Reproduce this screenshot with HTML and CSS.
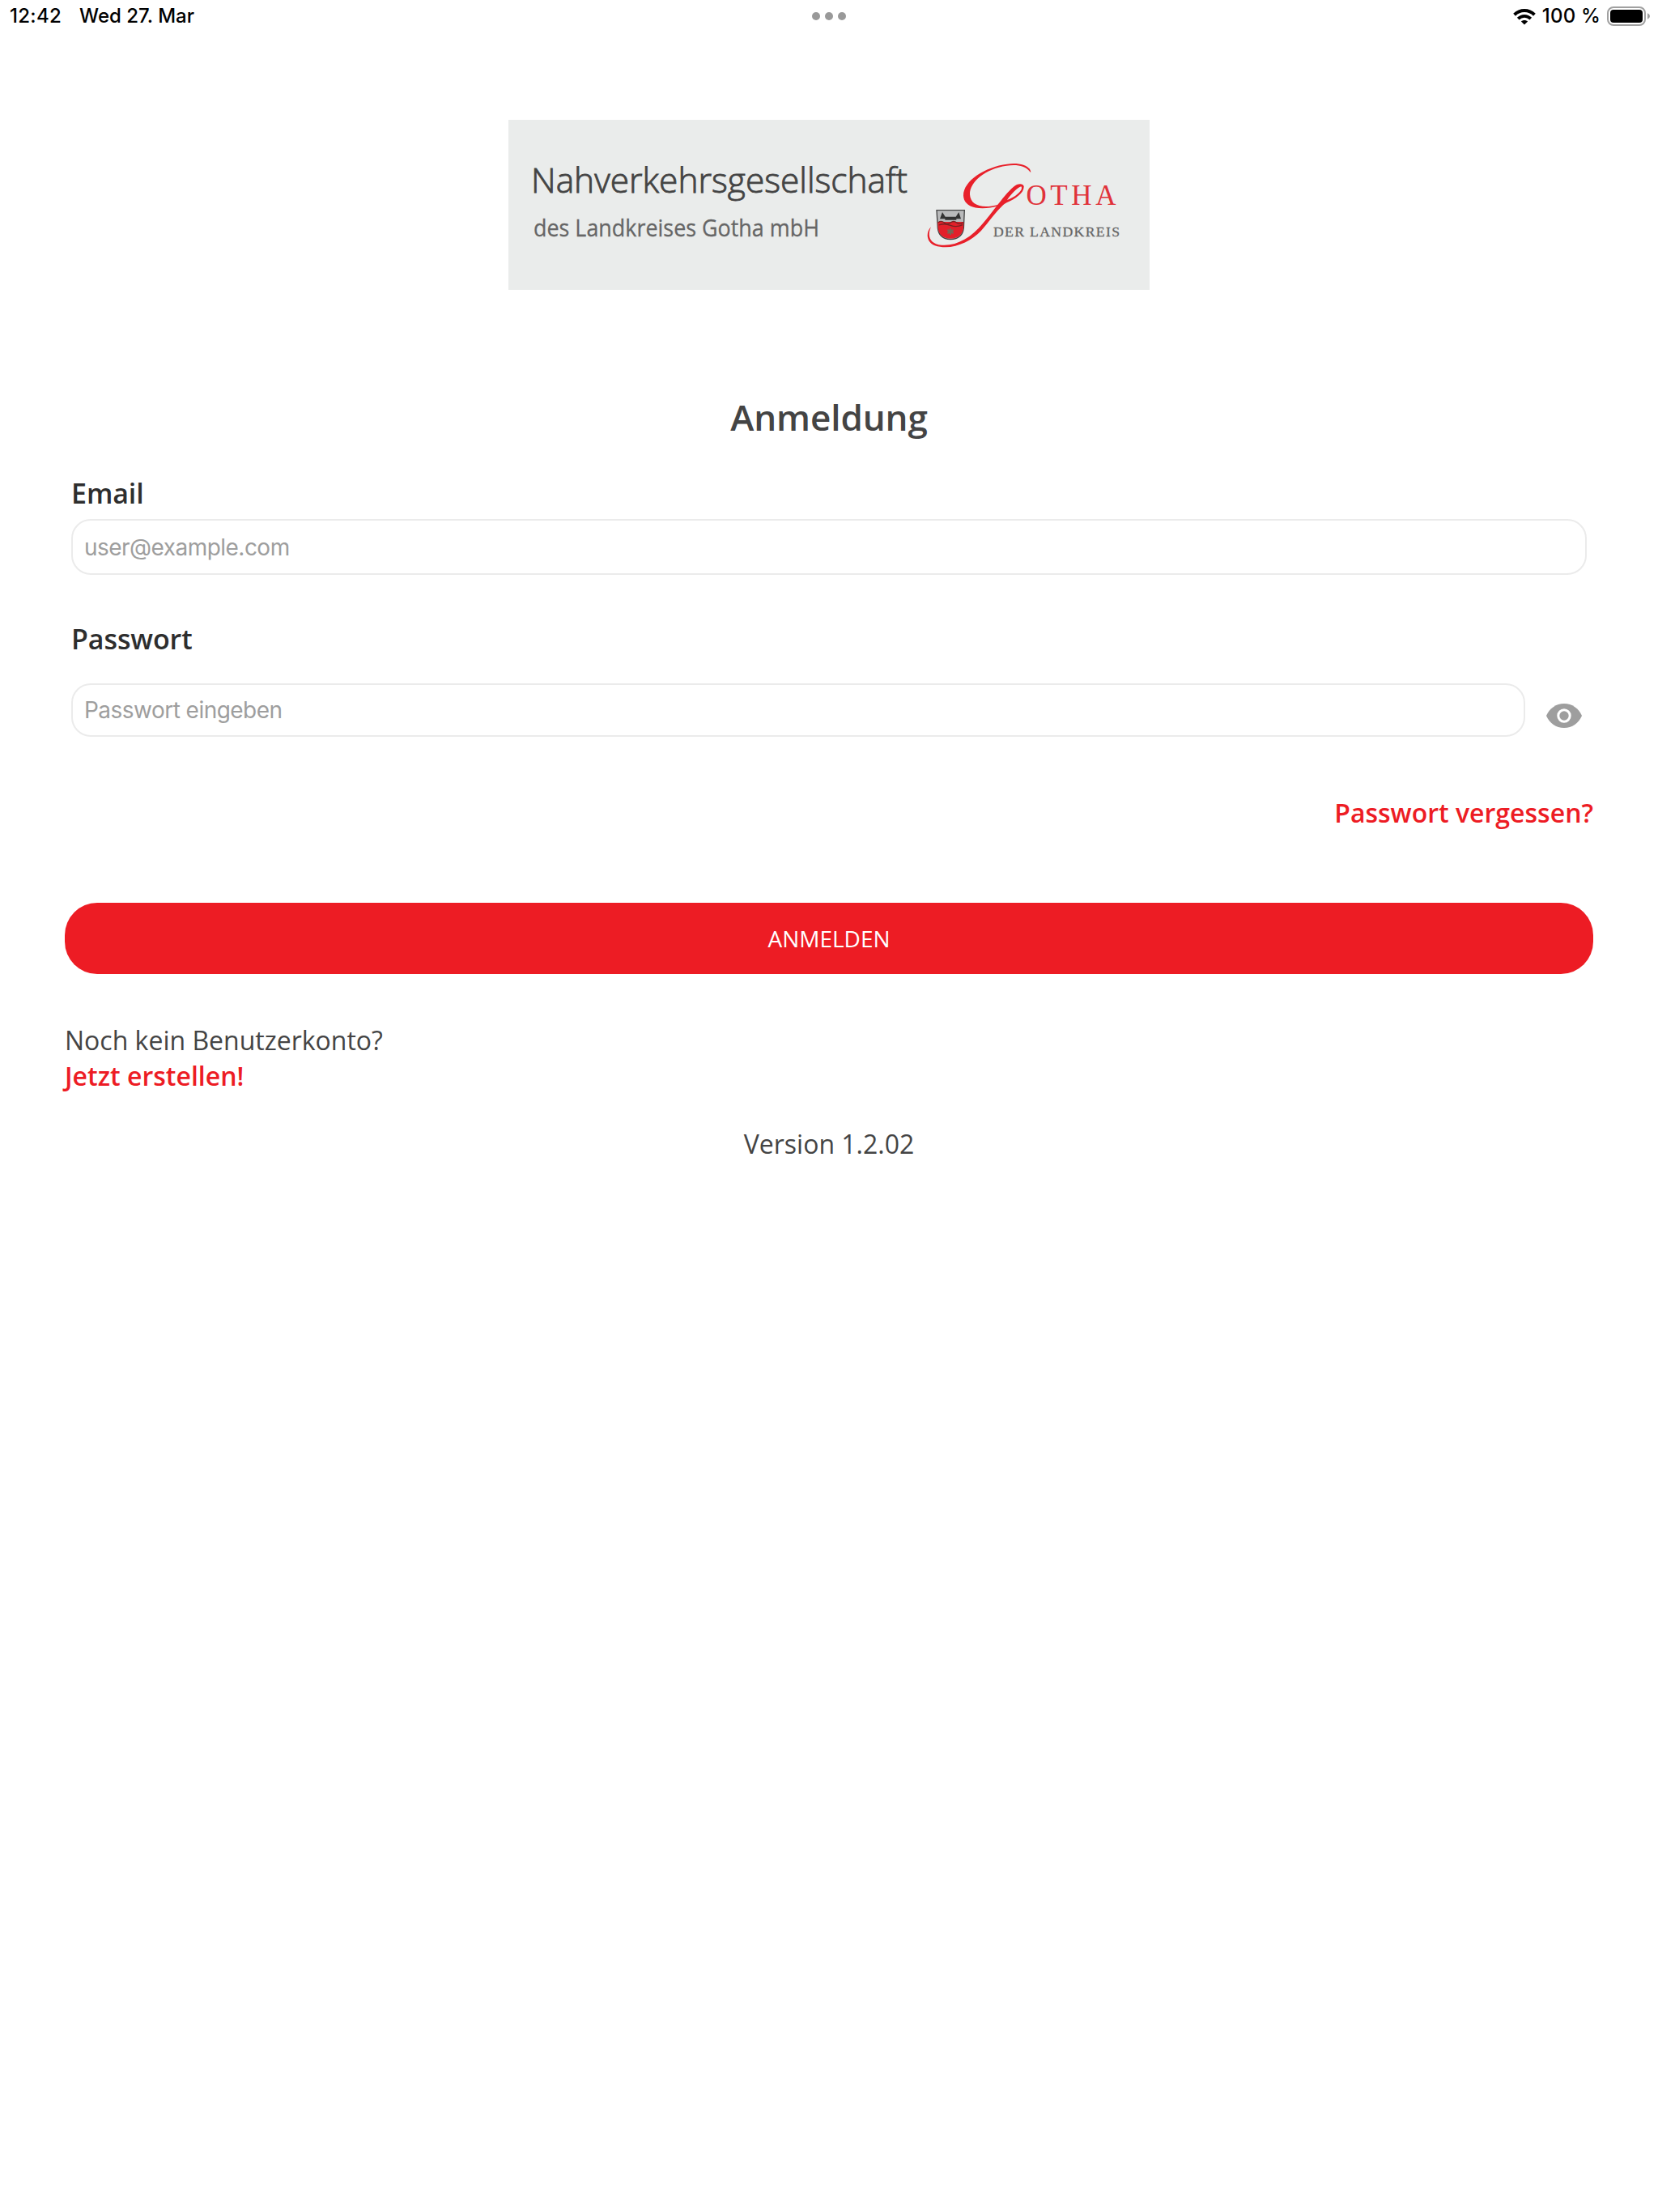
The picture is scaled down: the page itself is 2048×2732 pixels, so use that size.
FILE: index.html
```
<!DOCTYPE html>
<html lang="de">
<head>
<meta charset="utf-8">
<title>Anmeldung</title>
<link rel="stylesheet" href="styles.css">
</head>
<body>
<header class="status">
  <div class="status-left"><span class="time">12:42</span><span class="date">Wed 27. Mar</span></div>
  <div class="dots"><i></i><i></i><i></i></div>
  <div class="status-right">
    <svg class="wifi" viewBox="0 0 28 21" width="28" height="21">
      <path d="M1.6 8.2C8.6 1.4 19.4 1.4 26.4 8.2" fill="none" stroke="#000" stroke-width="4"/>
      <path d="M6.2 13.1C10.8 8.7 17.2 8.7 21.8 13.1" fill="none" stroke="#000" stroke-width="3.8"/>
      <path d="M14 20.4L9.9 16.4C12.2 14.4 15.8 14.4 18.1 16.4Z"/>
    </svg>
    <span class="percent">100 %</span>
    <svg class="battery" viewBox="0 0 54 24" width="54" height="24">
      <rect x="1" y="1" width="46" height="22" rx="7" fill="none" stroke="#a0a0a0" stroke-width="2"/>
      <rect x="4" y="4" width="40" height="16" rx="4"/>
      <path d="M50 8.2Q53 9.5 53 12T50 15.8Z" fill="#a0a0a0"/>
    </svg>
  </div>
</header>
<main class="page">
  <svg class="logo" viewBox="0 0 792 210" width="792" height="210">
    <rect width="793" height="210" fill="#eaeceb"/>
    <text class="logo-name" x="28" y="89.5" textLength="465" lengthAdjust="spacingAndGlyphs">Nahverkehrsgesellschaft</text>
    <text class="logo-sub" x="31" y="144.3" textLength="353" lengthAdjust="spacingAndGlyphs">des Landkreises Gotha mbH</text>
    <g transform="translate(492 -8) scale(.33333)">
      <path fill="#e8202a" d="M460 220C458 190 412 182 372 188C290 198 209 250 210 305C212 348 268 364 342 342L340 338C280 354 236 342 234 300C233 255 290 205 370 194C412 189 440 194 460 220Z"/>
      <path fill="#e8202a" fill-rule="evenodd" d="M90 421C70 440 72 478 104 490C165 510 235 478 275 436C312 394 346 342 372 330C404 316 436 294 434 270C430 258 410 260 396 272C362 300 322 362 282 408C240 460 185 492 130 488C82 484 76 450 90 421ZM372 321C386 300 412 274 424 271C434 282 406 308 372 321Z"/>
      <path d="M111 359H214L211 425C208 452 190 466 162 467C135 466 118 452 115 425Z" fill="#b9babb" stroke="#444" stroke-width="4"/>
      <path d="M115 402H211L210 425C206 450 190 463 162 464C135 463 119 450 116 425Z" fill="#e2202a"/>
      <path d="M123 391L132 366L143 383H182L193 366L201 391H184V395H142V391Z" fill="#333"/>
      <path d="M117 404Q128 396 139 405T162 405T185 405T209 404M119 414Q140 406 162 415T207 413" fill="none" stroke="#722" stroke-width="4"/>
      <path d="M162 426V450M151 432L173 444M173 432L151 444" stroke="#765" stroke-width="6"/>
    </g>
    <text class="logo-gotha" x="639.5" y="105.3" textLength="111" lengthAdjust="spacing">OTHA</text>
    <text class="logo-kreis" x="599" y="143.7" textLength="156" lengthAdjust="spacing">DER LANDKREIS</text>
  </svg>
  <h1>Anmeldung</h1>
  <form class="form">
    <label class="label" for="email">Email</label>
    <input class="field email" id="email" type="email" placeholder="user@example.com">
    <label class="label label-pw" for="pw">Passwort</label>
    <div class="pw-row">
      <input class="field pw" id="pw" type="password" placeholder="Passwort eingeben">
      <svg class="eye" viewBox="0 0 44 30" width="44" height="30">
        <path d="M0 15C4 6 12 0 22 0S40 6 44 15C40 24 32 30 22 30S4 24 0 15Z" fill="#9e9e9e"/>
        <circle cx="22" cy="15" r="7.2" fill="none" stroke="#fff" stroke-width="3"/>
      </svg>
    </div>
  </form>
  <a class="link forgot">Passwort vergessen?</a>
  <button class="submit" type="button">ANMELDEN</button>
  <p class="hint">Noch kein Benutzerkonto?</p>
  <a class="link create">Jetzt erstellen!</a>
  <p class="version">Version 1.2.02</p>
</main>
</body>
</html>
```
FILE: styles.css
```
* { box-sizing: border-box; }
body { margin: 0; background: #fff; color: #444; font-family: "Open Sans", sans-serif; }
h1, p { margin: 0; }
.status { display: grid; grid-template-columns: 1fr auto 1fr; align-items: center; height: 40px; font: 500 24px/40px Inter, sans-serif; color: #000; }
.status-left { display: flex; gap: 22px; padding-left: 12px; }
.time { letter-spacing: .3px; }
.dots { display: flex; gap: 6px; }
.dots i { width: 10px; height: 10px; border-radius: 50%; background: #999; }
.status-right { display: flex; justify-content: flex-end; align-items: center; padding-right: 9px; }
.percent { margin: 0 8px 0 8px; letter-spacing: .2px; }
.page { display: flex; flex-direction: column; padding: 108px 80px 0; }
.logo { align-self: center; display: block; }
.logo-name { font: 300 43px "Open Sans", sans-serif; fill: #444; stroke: #444; stroke-width: .9px; }
.logo-sub { font: 400 30px "Open Sans", sans-serif; fill: #666; stroke: #666; stroke-width: .3px; }
.logo-gotha { font: 35px "Liberation Serif", serif; fill: #e0323a; }
.logo-kreis { font: 17.7px "Liberation Serif", serif; fill: #666; stroke: #666; stroke-width: .3px; }
h1 { margin-top: 127px; text-align: center; font-size: 44px; line-height: 60px; font-weight: 600; letter-spacing: -.1px; }
.form { display: flex; flex-direction: column; padding: 0 8px; margin-top: 41px; }
.label { font-size: 34px; line-height: 46px; font-weight: 600; color: #2e2e2e; letter-spacing: -.1px; }
.field { border: 2px solid #ebebeb; border-radius: 24px; padding: 0 14px; font: 28px Inter, sans-serif; letter-spacing: -.53px; background: #fff; }
.field::placeholder { color: #9e9e9e; opacity: 1; }
.email { height: 69px; margin-top: 9px; }
.label-pw { margin-top: 56px; }
.pw-row { display: flex; align-items: center; margin-top: 32px; }
.pw { width: 1796px; height: 66px; }
.eye { margin: 14px 0 0 26px; }
.link { font-size: 32px; line-height: 44px; font-weight: 600; color: #ed1c24; }
.forgot { align-self: flex-end; margin-top: 72px; }
.submit { height: 88px; margin-top: 89px; border: 0; border-radius: 40px; background: #ed1c24; color: #fff; font: 28px "Open Sans", sans-serif; }
.hint { margin-top: 60px; font-size: 32px; line-height: 44px; }
.version { margin-top: 40px; text-align: center; font-size: 32px; line-height: 44px; }
```
